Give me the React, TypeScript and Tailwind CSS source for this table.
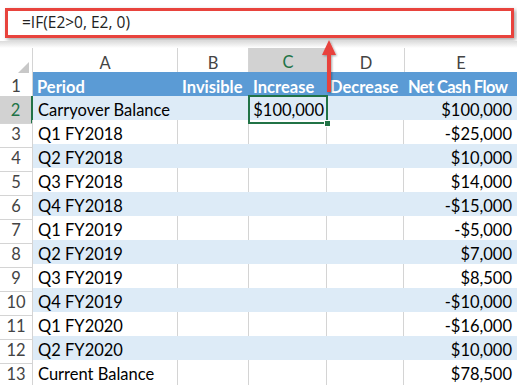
const rows: [string, string, string][] = [
  ["Carryover Balance", "$100,000", "$100,000"],
  ["Q1 FY2018", "", "-$25,000"],
  ["Q2 FY2018", "", "$10,000"],
  ["Q3 FY2018", "", "$14,000"],
  ["Q4 FY2018", "", "-$15,000"],
  ["Q1 FY2019", "", "-$5,000"],
  ["Q2 FY2019", "", "$7,000"],
  ["Q3 FY2019", "", "$8,500"],
  ["Q4 FY2019", "", "-$10,000"],
  ["Q1 FY2020", "", "-$16,000"],
  ["Q2 FY2020", "", "$10,000"],
  ["Current Balance", "", "$78,500"],
];

const cols = "grid grid-cols-[33px_145px_71px_78px_77px_113px]";

export default function App() {
  return (
    <div className="w-[517px] h-[385px] overflow-hidden bg-white relative font-['Lato',sans-serif] text-[16.5px] text-black">
      {/* formula bar */}
      <div className="h-[48px] pt-[8px] pl-[5px] pr-[3px] relative">
        <div className="h-[30px] w-[509px] border-[3px] border-[#e8433d] bg-white shadow-[2px_2px_4px_rgba(0,0,0,0.35)] flex items-center pl-[14px] font-['Open_Sans',sans-serif] text-[15.5px] text-[#222]">
          =IF(E2&gt;0, E2, 0)
        </div>
        <div className="absolute left-0 right-0 top-[41px] h-[7px] bg-gradient-to-b from-[#dcdcdc] to-white" />
      </div>

      {/* column headers */}
      <div className={`${cols} h-[24px] text-[#444]`}>
        <div className="border-r border-[#d4d4d4] relative">
          <div className="absolute right-[3px] bottom-[4px] w-0 h-0 border-l-[11px] border-l-transparent border-b-[11px] border-b-[#c8c8c8]" />
        </div>
        {["A", "B"].map((c) => (
          <div key={c} className="border-r border-[#d4d4d4] flex items-center justify-center pt-[2px]">
            {c}
          </div>
        ))}
        <div className="bg-[#d2d2d2] border-b-2 border-[#217346] text-[#217346] flex items-center justify-center pt-[2px]">
          C
        </div>
        {["D", "E"].map((c) => (
          <div key={c} className="border-l border-[#d4d4d4] flex items-center justify-center pt-[2px]">
            {c}
          </div>
        ))}
      </div>

      {/* row 1: table header */}
      <div className={`${cols} h-[24px]`}>
        <div className="border-r border-b border-[#d4d4d4] text-[#444] flex items-center justify-center pt-[2px]">1</div>
        <div className="bg-[#5b9bd5] text-white font-bold flex items-center pl-[4px] pt-[2px]">Period</div>
        <div className="bg-[#5b9bd5] text-white font-bold flex items-center pl-[4px] pt-[2px]">Invisible</div>
        <div className="bg-[#5b9bd5] text-white font-bold flex items-center pl-[4px] pt-[2px]">Increase</div>
        <div className="bg-[#5b9bd5] text-white font-bold flex items-center pl-[3px] pt-[2px]">Decrease</div>
        <div className="bg-[#5b9bd5] text-white font-bold flex items-center pl-[4px] pt-[2px] whitespace-nowrap tracking-[-0.6px]">
          Net Cash Flow
        </div>
      </div>

      {rows.map(([name, inc, net], i) => {
        const n = i + 2;
        const band = i % 2 === 0;
        const cell = band
          ? "bg-[#ddebf7] border-b border-[#9bc2e6]"
          : "bg-white border-b border-[#9bc2e6]";
        const vline = band ? "" : "border-r border-r-[#d4d4d4]";
        const sel = n === 2;
        return (
          <div key={n} className={`${cols} h-[24px]`}>
            <div
              className={`flex items-center justify-center pt-[2px] border-b border-[#d4d4d4] ${
                sel
                  ? "bg-[#d2d2d2] text-[#217346] border-r-2 border-r-[#217346]"
                  : "text-[#444] border-r border-r-[#d4d4d4]"
              }`}
            >
              {n}
            </div>
            <div className={`${cell} ${vline} flex items-center pl-[5px] pt-[2px] whitespace-nowrap`}>{name}</div>
            <div className={`${cell} ${vline}`} />
            <div className={`${cell} ${vline} relative flex items-center justify-end pr-[3px] pt-[2px]`}>
              {sel && (
                <>
                  <div className="absolute z-10 -left-[1px] -top-[1px] -right-[1px] bottom-[-1px] border-2 border-[#217346]" />
                  <div className="absolute z-10 -right-[4px] -bottom-[4px] w-[7px] h-[7px] bg-[#217346] border border-white" />
                </>
              )}
              {inc}
            </div>
            <div className={`${cell} ${vline}`} />
            <div className={`${cell} flex items-center justify-end pr-[5px] pt-[2px]`}>{net}</div>
          </div>
        );
      })}

      {/* red arrow */}
      <svg className="absolute z-20 left-[319px] top-[38px]" width="22" height="58" viewBox="0 0 22 58">
        <defs>
          <filter id="sh" x="-50%" y="-20%" width="200%" height="140%">
            <feDropShadow dx="1" dy="1" stdDeviation="1" floodOpacity="0.35" />
          </filter>
        </defs>
        <g filter="url(#sh)">
          <polygon points="10,2 3,17 17,17" fill="#e8433d" />
          <rect x="8" y="16" width="4" height="38" fill="#e8433d" />
        </g>
      </svg>
    </div>
  );
}
